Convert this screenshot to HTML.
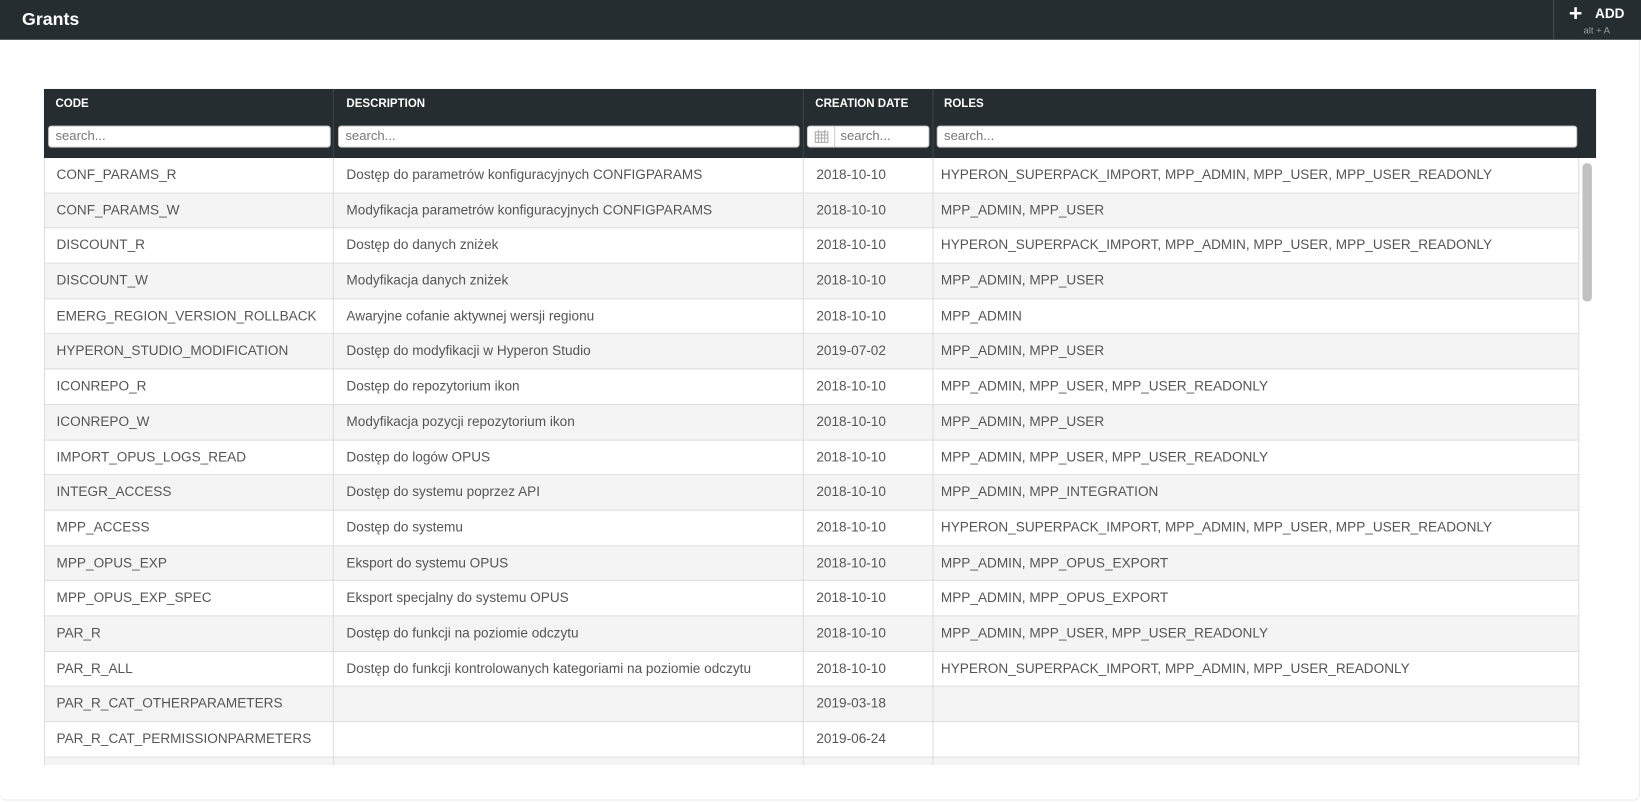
<!DOCTYPE html>
<html><head><meta charset="utf-8"><style>
body{margin:0;width:1641px;height:802px;background:#fff;font-family:"Liberation Sans",sans-serif;position:relative;overflow:hidden}
#w{position:absolute;left:0;top:0;width:1568px;height:767px;transform:scale(1.0466);transform-origin:0 0}
.top{position:absolute;left:0;top:0;width:1568px;height:38px;background:#252d30}
.top .t{position:absolute;left:21px;top:9px;color:#fff;font-weight:bold;font-size:17px}
.add{position:absolute;left:1484px;top:0;width:84px;height:38px;border-left:1px solid #444d50}
.add .p{position:absolute;left:14px;top:0px;color:#fff;font-size:22px;font-weight:bold}
.add .a{position:absolute;left:39px;top:5px;color:#fff;font-size:13px;font-weight:bold}
.add .s{position:absolute;left:28px;top:24px;color:#9aa0a2;font-size:9px}
.card{position:absolute;left:0;top:38px;width:1566px;height:726px;border-bottom:1px solid #e4e4e4;border-right:1px solid #eee;border-radius:0 0 6px 6px}
.thead{position:absolute;left:42px;top:85px;width:1483px;height:66px;background:#252d30}
.th{position:absolute;top:8px;color:#fff;font-weight:bold;font-size:11px}
.in{position:absolute;top:35px;height:21px;background:#fff;border:1px solid #ccc;border-radius:3px;box-sizing:border-box;font-size:12.5px;color:#777;padding:2px 6px}
.vl{position:absolute;top:0;width:1px;height:66px;background:#3c4548}
.body{position:absolute;left:42px;top:151px;width:1483px;height:580px;overflow:hidden;border-left:1px solid #ddd;border-right:1px solid #ddd;box-sizing:border-box}
.row{height:33.7px;border-bottom:1px solid #ddd;box-sizing:border-box;position:relative;font-size:13px;color:#555;width:1466px}
.row:nth-child(even){background:#f4f4f4}
.row span{position:absolute;top:8px;white-space:nowrap}
.c{position:absolute;top:0;width:1px;height:580px;background:#ddd}
.sb{position:absolute;left:1508px;top:151px;width:17px;height:580px;background:#fff;border-left:1px solid #ddd}
.th2{position:absolute;left:1512px;top:156px;width:9px;height:132px;background:#c1c1c1;border-radius:4px}
</style></head><body><div id="w">
<div class="top"><div class="t">Grants</div>
<div class="add"><div class="p">+</div><div class="a">ADD</div><div class="s">alt + A</div></div></div>
<div class="card"></div>
<div class="thead">
<div class="th" style="left:11px">CODE</div><div class="th" style="left:289px">DESCRIPTION</div><div class="th" style="left:737px">CREATION DATE</div><div class="th" style="left:860px">ROLES</div>
<div class="vl" style="left:276px"></div><div class="vl" style="left:725px"></div><div class="vl" style="left:849px"></div>
<div class="in" style="left:4px;width:270px">search...</div>
<div class="in" style="left:281px;width:441px">search...</div>
<div class="in" style="left:729px;width:117px;padding-left:31px"><svg style="position:absolute;left:6px;top:3px" width="14" height="13" viewBox="0 0 14 13"><rect x="1" y="2" width="12" height="10" fill="none" stroke="#aaa"/><path d="M1 5h12M1 8h12M4 2v10M7 2v10M10 2v10M4 0v3M10 0v3" stroke="#aaa"/></svg><span style="position:absolute;left:25px;top:0;width:1px;height:19px;background:#ccc"></span>search...</div>
<div class="in" style="left:853px;width:612px">search...</div>
</div>
<div class="body">
<div class="row"><span style="left:11px">CONF_PARAMS_R</span><span style="left:288px">Dostęp do parametrów konfiguracyjnych CONFIGPARAMS</span><span style="left:737px">2018-10-10</span><span style="left:856px">HYPERON_SUPERPACK_IMPORT, MPP_ADMIN, MPP_USER, MPP_USER_READONLY</span></div>
<div class="row"><span style="left:11px">CONF_PARAMS_W</span><span style="left:288px">Modyfikacja parametrów konfiguracyjnych CONFIGPARAMS</span><span style="left:737px">2018-10-10</span><span style="left:856px">MPP_ADMIN, MPP_USER</span></div>
<div class="row"><span style="left:11px">DISCOUNT_R</span><span style="left:288px">Dostęp do danych zniżek</span><span style="left:737px">2018-10-10</span><span style="left:856px">HYPERON_SUPERPACK_IMPORT, MPP_ADMIN, MPP_USER, MPP_USER_READONLY</span></div>
<div class="row"><span style="left:11px">DISCOUNT_W</span><span style="left:288px">Modyfikacja danych zniżek</span><span style="left:737px">2018-10-10</span><span style="left:856px">MPP_ADMIN, MPP_USER</span></div>
<div class="row"><span style="left:11px">EMERG_REGION_VERSION_ROLLBACK</span><span style="left:288px">Awaryjne cofanie aktywnej wersji regionu</span><span style="left:737px">2018-10-10</span><span style="left:856px">MPP_ADMIN</span></div>
<div class="row"><span style="left:11px">HYPERON_STUDIO_MODIFICATION</span><span style="left:288px">Dostęp do modyfikacji w Hyperon Studio</span><span style="left:737px">2019-07-02</span><span style="left:856px">MPP_ADMIN, MPP_USER</span></div>
<div class="row"><span style="left:11px">ICONREPO_R</span><span style="left:288px">Dostęp do repozytorium ikon</span><span style="left:737px">2018-10-10</span><span style="left:856px">MPP_ADMIN, MPP_USER, MPP_USER_READONLY</span></div>
<div class="row"><span style="left:11px">ICONREPO_W</span><span style="left:288px">Modyfikacja pozycji repozytorium ikon</span><span style="left:737px">2018-10-10</span><span style="left:856px">MPP_ADMIN, MPP_USER</span></div>
<div class="row"><span style="left:11px">IMPORT_OPUS_LOGS_READ</span><span style="left:288px">Dostęp do logów OPUS</span><span style="left:737px">2018-10-10</span><span style="left:856px">MPP_ADMIN, MPP_USER, MPP_USER_READONLY</span></div>
<div class="row"><span style="left:11px">INTEGR_ACCESS</span><span style="left:288px">Dostęp do systemu poprzez API</span><span style="left:737px">2018-10-10</span><span style="left:856px">MPP_ADMIN, MPP_INTEGRATION</span></div>
<div class="row"><span style="left:11px">MPP_ACCESS</span><span style="left:288px">Dostęp do systemu</span><span style="left:737px">2018-10-10</span><span style="left:856px">HYPERON_SUPERPACK_IMPORT, MPP_ADMIN, MPP_USER, MPP_USER_READONLY</span></div>
<div class="row"><span style="left:11px">MPP_OPUS_EXP</span><span style="left:288px">Eksport do systemu OPUS</span><span style="left:737px">2018-10-10</span><span style="left:856px">MPP_ADMIN, MPP_OPUS_EXPORT</span></div>
<div class="row"><span style="left:11px">MPP_OPUS_EXP_SPEC</span><span style="left:288px">Eksport specjalny do systemu OPUS</span><span style="left:737px">2018-10-10</span><span style="left:856px">MPP_ADMIN, MPP_OPUS_EXPORT</span></div>
<div class="row"><span style="left:11px">PAR_R</span><span style="left:288px">Dostęp do funkcji na poziomie odczytu</span><span style="left:737px">2018-10-10</span><span style="left:856px">MPP_ADMIN, MPP_USER, MPP_USER_READONLY</span></div>
<div class="row"><span style="left:11px">PAR_R_ALL</span><span style="left:288px">Dostęp do funkcji kontrolowanych kategoriami na poziomie odczytu</span><span style="left:737px">2018-10-10</span><span style="left:856px">HYPERON_SUPERPACK_IMPORT, MPP_ADMIN, MPP_USER_READONLY</span></div>
<div class="row"><span style="left:11px">PAR_R_CAT_OTHERPARAMETERS</span><span style="left:737px">2019-03-18</span></div>
<div class="row"><span style="left:11px">PAR_R_CAT_PERMISSIONPARMETERS</span><span style="left:737px">2019-06-24</span></div>
<div class="row"></div>
<div class="c" style="left:275px"></div><div class="c" style="left:724px"></div><div class="c" style="left:848px"></div>
</div>
<div class="sb"></div><div class="th2"></div>
</div></body></html>
